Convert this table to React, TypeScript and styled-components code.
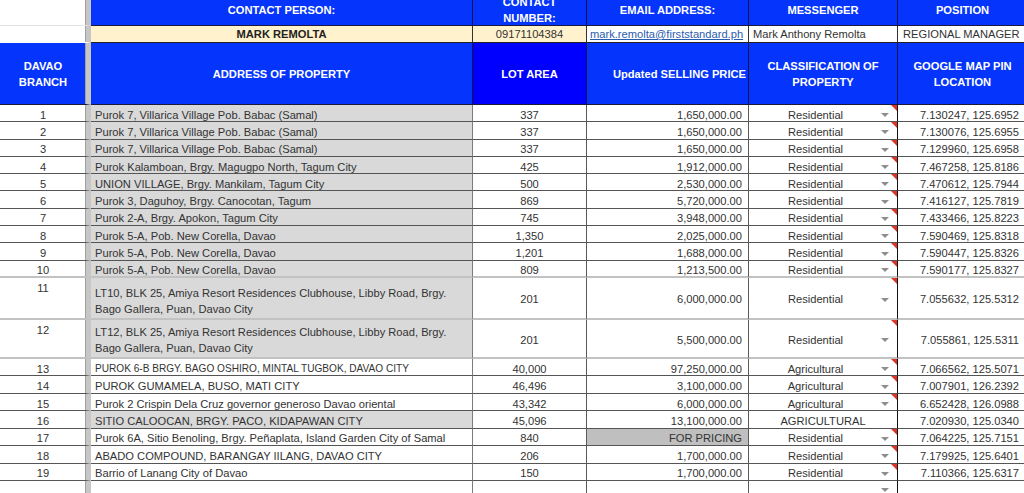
import React from "react";
import styled, { createGlobalStyle } from "styled-components";

const GlobalStyle = createGlobalStyle`
  html, body {
    margin: 0;
    padding: 0;
    background: #ffffff;
    overflow: hidden;
  }
  #root {
    width: 1024px;
    height: 493px;
    overflow: hidden;
  }
`;

const BLUE = "#0535fc";
const DEEP_BLUE = "#0000ff";
const COLUMNS = "91px 382px 114px 162px 149px 130px";

type Align = "left" | "center" | "right";
type VAlign = "top" | "center" | "bottom";

const vMap: Record<VAlign, string> = {
  top: "flex-start",
  center: "center",
  bottom: "flex-end",
};

const Sheet = styled.div`
  width: 1028px;
  font-family: "Liberation Sans", Arial, sans-serif;
  font-size: 11.15px;
  line-height: 16px;
  color: #333333;
`;

const Row = styled.div<{ $h: number }>`
  display: grid;
  grid-template-columns: ${COLUMNS};
  grid-template-rows: minmax(0, 1fr);
  height: ${(p) => p.$h}px;
`;

const Cell = styled.div<{
  $align?: Align;
  $v?: VAlign;
  $bg?: string;
  $line?: string;
  $lineW?: number;
  $edge?: string;
}>`
  box-sizing: border-box;
  position: relative;
  min-height: 0;
  display: flex;
  flex-direction: column;
  justify-content: ${(p) => vMap[p.$v || "center"]};
  text-align: ${(p) => p.$align || "left"};
  padding: 0 4px;
  background: ${(p) => p.$bg || "#ffffff"};
  border-right: 1px solid ${(p) => p.$edge || "#5a5a5a"};
  border-bottom: ${(p) => p.$lineW || 1}px solid ${(p) => p.$line || "#555555"};
  overflow: hidden;
  white-space: nowrap;
`;

/* frozen first column, with the grey freeze bar on its right */
const IndexCell = styled(Cell)`
  border-right: 5px solid #c6c6c6;
  box-shadow: inset -1px 0 0 #a0a0a0;
  text-align: center;
`;

const HeadCell = styled(Cell)<{ $pushUp?: boolean }>`
  background: ${(p) => p.$bg || BLUE};
  color: #ffffff;
  font-weight: bold;
  border-right-color: #14144a;
  border-bottom-color: #1a1a3a;
  padding-bottom: ${(p) => (p.$pushUp ? 6 : 0)}px;
`;

const BranchHead = styled(HeadCell)`
  border-right: 5px solid #c6c6c6;
  box-shadow: inset -1px 0 0 #a0a0a0;
`;

const InfoCell = styled(Cell)<{ $strong?: boolean }>`
  font-weight: ${(p) => (p.$strong ? "bold" : "normal")};
  color: ${(p) => (p.$strong ? "#222222" : "#333333")};
  border-right-color: #333333;
  border-bottom-color: #222222;
`;

const MailLink = styled.span`
  color: #2a5db0;
  text-decoration: underline;
`;

const DataCell = styled(Cell)<{ $small?: boolean }>`
  padding-top: 3px;
  font-size: ${(p) => (p.$small ? "10.1px" : "11.15px")};
`;

const AddressCell = styled(DataCell)`
  padding-top: 0;
  padding-bottom: 1px;
`;

const ClassCell = styled(DataCell)<{ $picker?: boolean }>`
  text-align: center;
  padding-right: ${(p) => (p.$picker ? 19 : 4)}px;
  border-right-color: #111111;
`;

const Caret = styled.span`
  position: absolute;
  right: 8px;
  top: 50%;
  width: 0;
  height: 0;
  border-left: 4px solid transparent;
  border-right: 4px solid transparent;
  border-top: 4px solid #8d8d8d;
`;

const NoteFlag = styled.span`
  position: absolute;
  right: 0;
  top: 0;
  width: 0;
  height: 0;
  border-left: 6px solid transparent;
  border-top: 6px solid #dd3528;
`;

interface Listing {
  n: number;
  addr: React.ReactNode;
  area: string;
  price: string;
  cls: string;
  gps: string;
  gray?: boolean;
  small?: boolean;
  pending?: boolean;
  plain?: boolean;
  h?: number;
  soft?: boolean;
}

const samal = "Purok 7, Villarica Village Pob. Babac (Samal)";
const corella = "Purok 5-A, Pob. New Corella, Davao";

const listings: Listing[] = [
  { n: 1, addr: samal, area: "337", price: "1,650,000.00", cls: "Residential", gps: "7.130247, 125.6952", gray: true },
  { n: 2, addr: samal, area: "337", price: "1,650,000.00", cls: "Residential", gps: "7.130076, 125.6955", gray: true },
  { n: 3, addr: samal, area: "337", price: "1,650,000.00", cls: "Residential", gps: "7.129960, 125.6958", gray: true },
  { n: 4, addr: "Purok Kalamboan, Brgy. Magugpo North, Tagum City", area: "425", price: "1,912,000.00", cls: "Residential", gps: "7.467258, 125.8186", gray: true },
  { n: 5, addr: "UNION VILLAGE, Brgy. Mankilam, Tagum City", area: "500", price: "2,530,000.00", cls: "Residential", gps: "7.470612, 125.7944", gray: true },
  { n: 6, addr: "Purok 3, Daguhoy, Brgy. Canocotan, Tagum", area: "869", price: "5,720,000.00", cls: "Residential", gps: "7.416127, 125.7819", gray: true },
  { n: 7, addr: "Purok 2-A, Brgy. Apokon, Tagum City", area: "745", price: "3,948,000.00", cls: "Residential", gps: "7.433466, 125.8223", gray: true },
  { n: 8, addr: corella, area: "1,350", price: "2,025,000.00", cls: "Residential", gps: "7.590469, 125.8318", gray: true },
  { n: 9, addr: corella, area: "1,201", price: "1,688,000.00", cls: "Residential", gps: "7.590447, 125.8326", gray: true },
  { n: 10, addr: corella, area: "809", price: "1,213,500.00", cls: "Residential", gps: "7.590177, 125.8327", gray: true, soft: true },
  {
    n: 11,
    addr: (
      <>
        LT10, BLK 25, Amiya Resort Residences Clubhouse, Libby Road, Brgy.
        <br />
        Bago Gallera, Puan, Davao City
      </>
    ),
    area: "201",
    price: "6,000,000.00",
    cls: "Residential",
    gps: "7.055632, 125.5312",
    gray: true,
    h: 42,
    soft: true,
  },
  {
    n: 12,
    addr: (
      <>
        LT12, BLK 25, Amiya Resort Residences Clubhouse, Libby Road, Brgy.
        <br />
        Bago Gallera, Puan, Davao City
      </>
    ),
    area: "201",
    price: "5,500,000.00",
    cls: "Residential",
    gps: "7.055861, 125.5311",
    gray: true,
    h: 39,
    soft: true,
  },
  { n: 13, addr: "PUROK 6-B BRGY. BAGO OSHIRO, MINTAL TUGBOK, DAVAO CITY", area: "40,000", price: "97,250,000.00", cls: "Agricultural", gps: "7.066562, 125.5071", small: true, h: 17.43 },
  { n: 14, addr: "PUROK GUMAMELA, BUSO, MATI CITY", area: "46,496", price: "3,100,000.00", cls: "Agricultural", gps: "7.007901, 126.2392", h: 17.43 },
  { n: 15, addr: "Purok 2 Crispin Dela Cruz governor generoso Davao oriental", area: "43,342", price: "6,000,000.00", cls: "Agricultural", gps: "6.652428, 126.0988", h: 17.43 },
  { n: 16, addr: "SITIO CALOOCAN, BRGY. PACO, KIDAPAWAN CITY", area: "45,096", price: "13,100,000.00", cls: "AGRICULTURAL", gps: "7.020930, 125.0340", gray: true, plain: true, h: 17.43 },
  { n: 17, addr: "Purok 6A, Sitio Benoling, Brgy. Peñaplata, Island Garden City of Samal", area: "840", price: "FOR PRICING", cls: "Residential", gps: "7.064225, 125.7151", pending: true, h: 17.43 },
  { n: 18, addr: "ABADO COMPOUND, BARANGAY IILANG, DAVAO CITY", area: "206", price: "1,700,000.00", cls: "Residential", gps: "7.179925, 125.6401", h: 17.43 },
  { n: 19, addr: "Barrio of Lanang City of Davao", area: "150", price: "1,700,000.00", cls: "Residential", gps: "7.110366, 125.6317", h: 17.43 },
];

function ListingRow({ item }: { item: Listing }) {
  const tall = (item.h || 17.3) > 30;
  const line = item.soft ? "#c2c2c2" : "#555555";
  const lineW = item.soft ? 2 : 1;
  return (
    <Row $h={item.h || 17.3}>
      <IndexCell $v={tall ? "top" : "center"} $line={line} $lineW={lineW} style={tall ? { paddingTop: 2 } : { paddingTop: 3 }}>
        {item.n}
      </IndexCell>
      <AddressCell
        $v={tall ? "bottom" : "center"}
        $bg={item.gray ? "#d9d9d9" : "#ffffff"}
        $line={line}
        $lineW={lineW}
        $edge="#7a7a7a"
        $small={item.small}
        style={tall ? undefined : { paddingTop: 3, paddingBottom: 0 }}
      >
        <div>{item.addr}</div>
      </AddressCell>
      <DataCell $align="center" $line={line} $lineW={lineW}>
        {item.area}
      </DataCell>
      <DataCell $align="right" $bg={item.pending ? "#bfbfbf" : "#ffffff"} $line={line} $lineW={lineW} style={{ paddingRight: 6 }}>
        {item.price}
      </DataCell>
      <ClassCell $picker={!item.plain} $line={line} $lineW={lineW}>
        {item.cls}
        {!item.plain && <Caret />}
        {!item.plain && <NoteFlag />}
      </ClassCell>
      <DataCell $align="right" $line={line} $lineW={lineW} $edge="transparent" style={{ paddingRight: 8 }}>
        {item.gps}
      </DataCell>
    </Row>
  );
}

export default function App() {
  return (
    <>
      <GlobalStyle />
      <Sheet>
        <Row $h={26}>
          <IndexCell $line="#e3e3e3" />
          <HeadCell $align="center" $pushUp $line="#222222">
            CONTACT PERSON:
          </HeadCell>
          <HeadCell $align="center" $pushUp $line="#222222">
            <div>
              CONTACT
              <br />
              NUMBER:
            </div>
          </HeadCell>
          <HeadCell $align="center" $pushUp $line="#222222">
            EMAIL ADDRESS:
          </HeadCell>
          <HeadCell $align="center" $pushUp $line="#222222">
            MESSENGER
          </HeadCell>
          <HeadCell $align="center" $pushUp $line="#222222">
            POSITION
          </HeadCell>
        </Row>

        <Row $h={17}>
          <IndexCell $line="#ffffff" />
          <InfoCell $align="center" $bg="#fff2cc" $strong>
            MARK REMOLTA
          </InfoCell>
          <InfoCell $align="center" $bg="#fff2cc">
            09171104384
          </InfoCell>
          <InfoCell style={{ paddingLeft: 3 }}>
            <MailLink>mark.remolta@firststandard.ph</MailLink>
          </InfoCell>
          <InfoCell>Mark Anthony Remolta</InfoCell>
          <InfoCell $edge="transparent" style={{ paddingLeft: 5 }}>
            REGIONAL MANAGER
          </InfoCell>
        </Row>

        <Row $h={62}>
          <BranchHead $align="center">
            <div>
              DAVAO
              <br />
              BRANCH
            </div>
          </BranchHead>
          <HeadCell $align="center">ADDRESS OF PROPERTY</HeadCell>
          <HeadCell $align="center" $bg={DEEP_BLUE}>
            LOT AREA
          </HeadCell>
          <HeadCell $align="right" style={{ paddingRight: 2 }}>
            Updated SELLING PRICE
          </HeadCell>
          <HeadCell $align="center">
            <div>
              CLASSIFICATION OF
              <br />
              PROPERTY
            </div>
          </HeadCell>
          <HeadCell $align="center" $edge="transparent">
            <div>
              GOOGLE MAP PIN
              <br />
              LOCATION
            </div>
          </HeadCell>
        </Row>

        {listings.map((item) => (
          <ListingRow key={item.n} item={item} />
        ))}

        <Row $h={24}>
          <IndexCell $line="#ffffff" />
          <AddressCell $line="#ffffff" $edge="#7a7a7a" />
          <DataCell $line="#ffffff" />
          <DataCell $line="#ffffff" />
          <ClassCell $picker $line="#ffffff">
            <Caret style={{ top: 7 }} />
          </ClassCell>
          <DataCell $line="#ffffff" $edge="transparent" />
        </Row>
      </Sheet>
    </>
  );
}
